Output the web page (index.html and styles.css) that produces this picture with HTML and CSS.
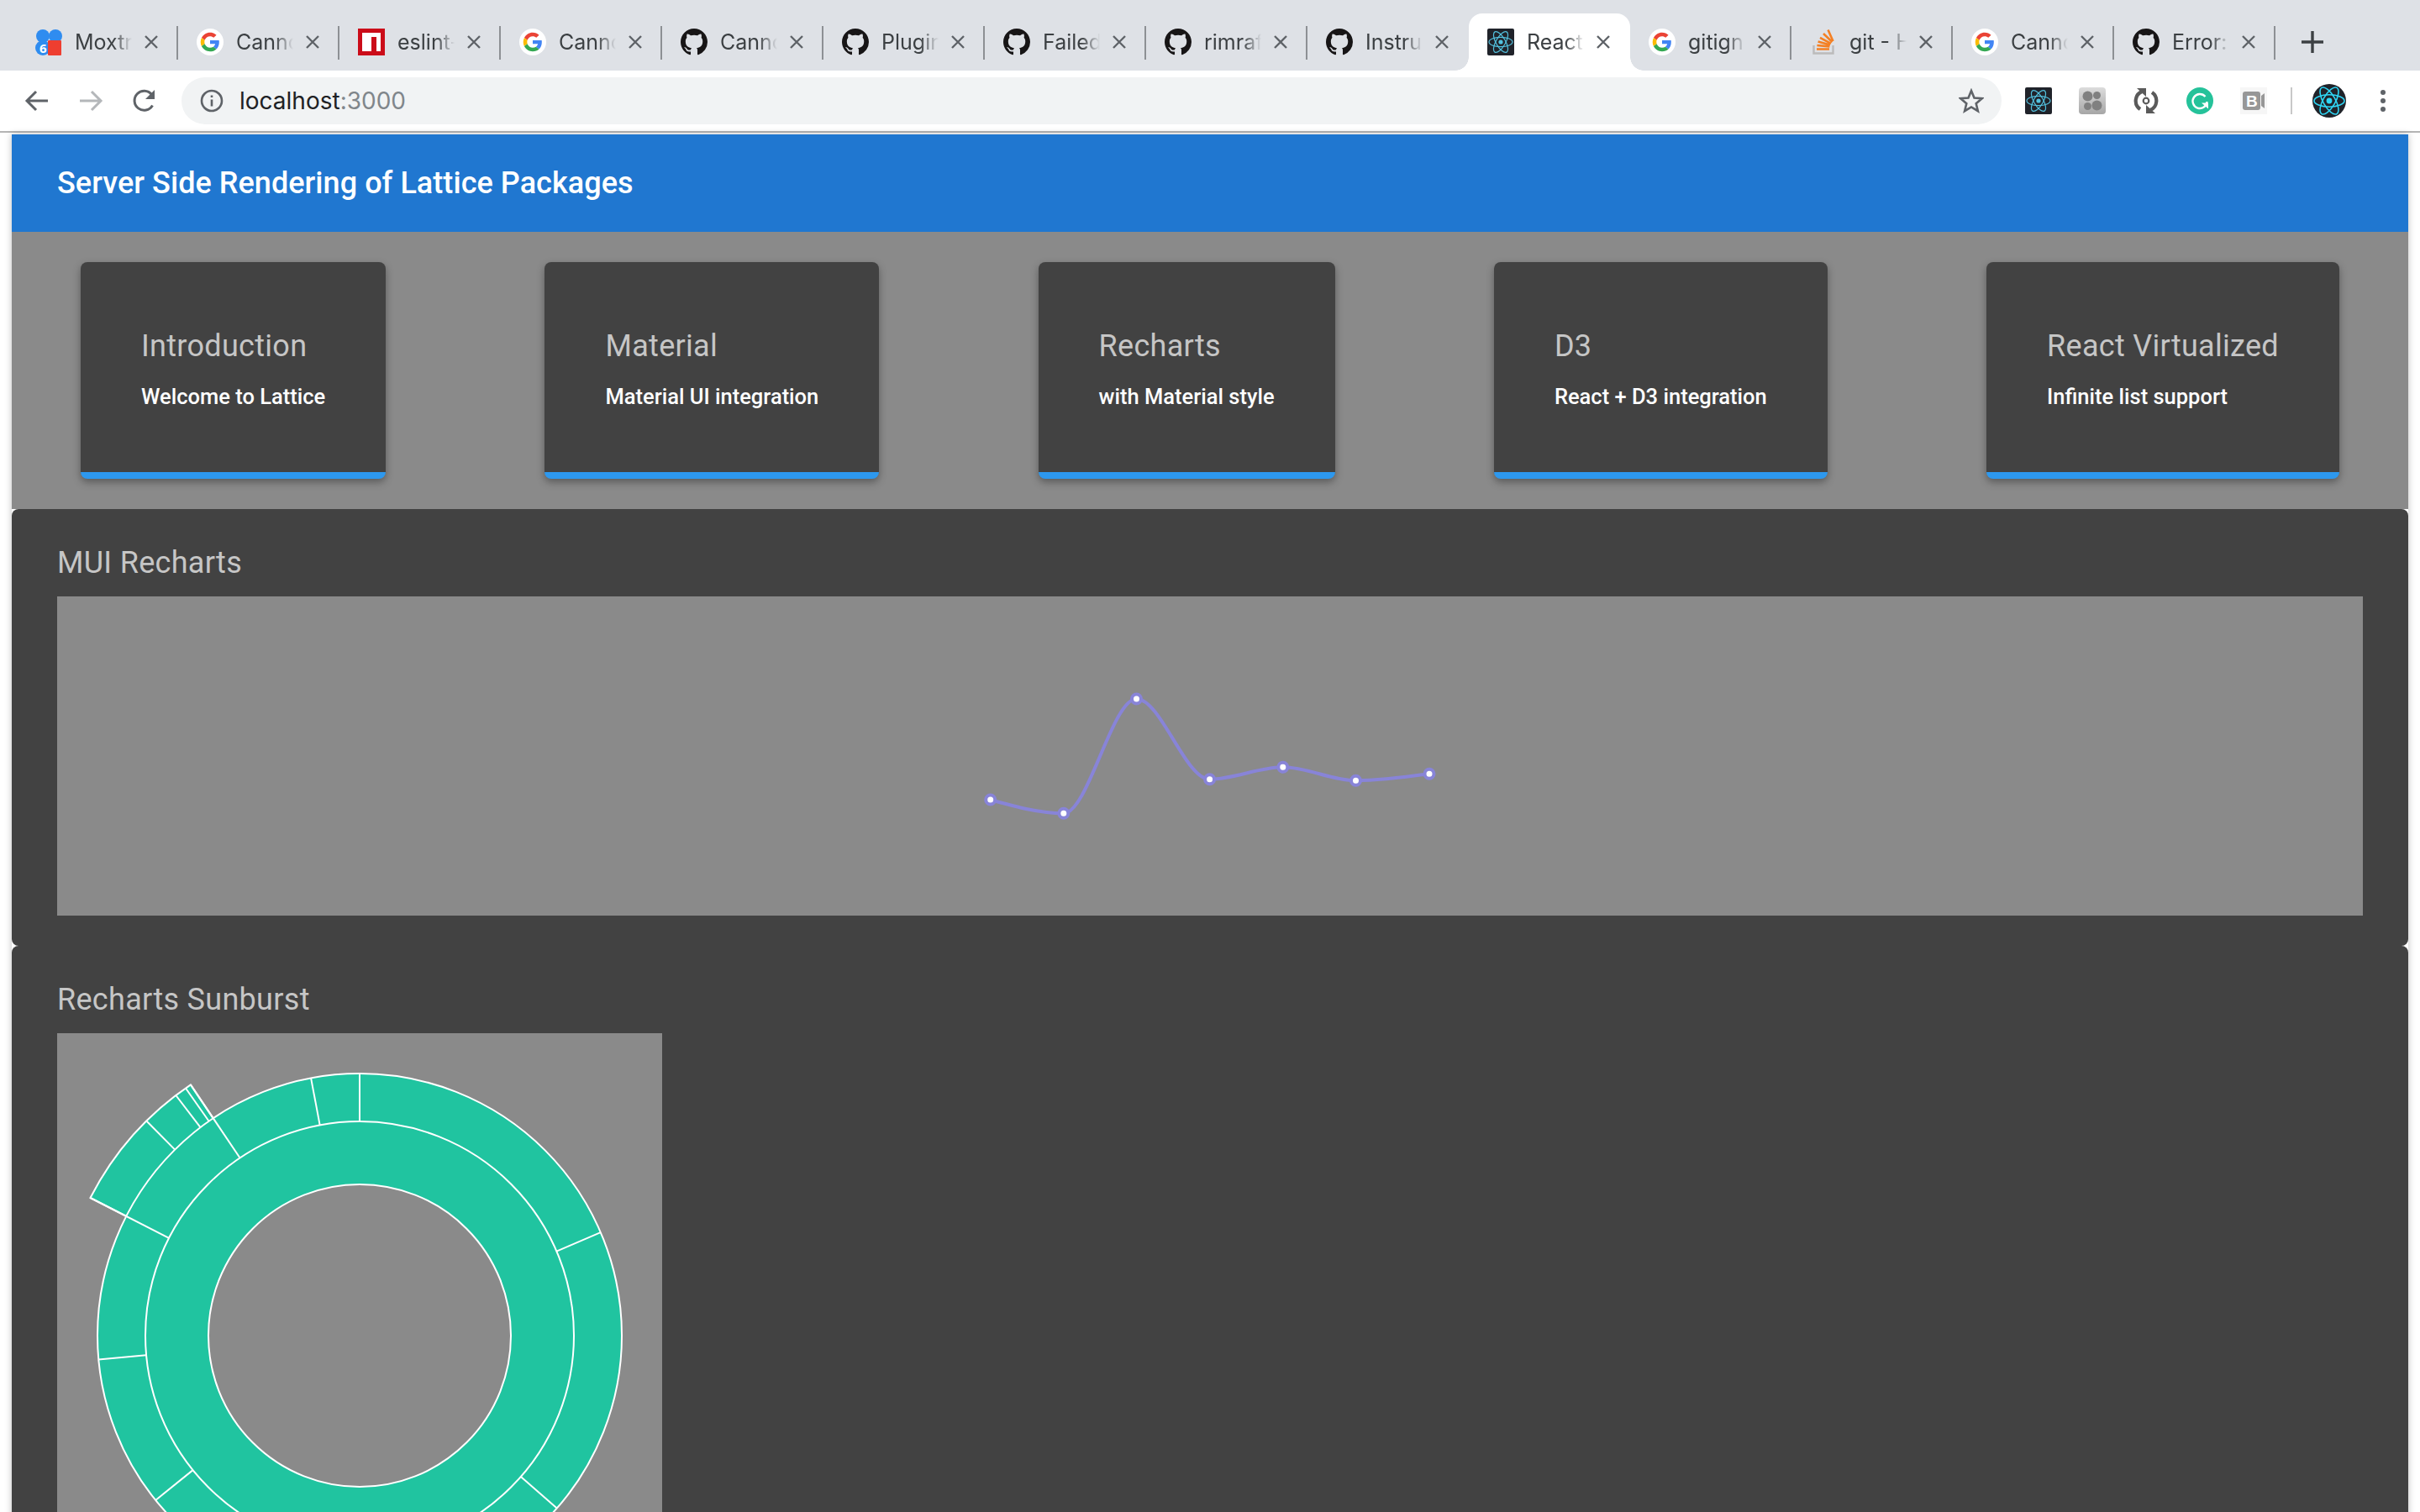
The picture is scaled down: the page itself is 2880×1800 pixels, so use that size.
FILE: index.html
```html
<!DOCTYPE html>
<html lang="en">
<head>
    <meta charset="UTF-8">
    <title>React App</title>
    <link rel="stylesheet" href="styles.css">
</head>
<body>

    <svg class="icon-defs" width="0" height="0">
        <symbol id="i-google" viewBox="-10 -10 68 68">
            <circle cx="24" cy="24" r="34" fill="#fff"/>
            <path fill="#ea4335" d="M24 9.5c3.54 0 6.71 1.22 9.21 3.6l6.85-6.85C35.9 2.38 30.47 0 24 0 14.62 0 6.51 5.38 2.56 13.22l7.98 6.19C12.43 13.72 17.74 9.5 24 9.5z"/>
            <path fill="#4285f4" d="M46.98 24.55c0-1.57-.15-3.09-.38-4.55H24v9.02h12.94c-.58 2.96-2.26 5.48-4.78 7.18l7.73 6c4.51-4.18 7.09-10.36 7.09-17.65z"/>
            <path fill="#fbbc05" d="M10.53 28.59c-.48-1.45-.76-2.99-.76-4.59s.27-3.14.76-4.59l-7.98-6.19C.92 16.46 0 20.12 0 24c0 3.88.92 7.54 2.56 10.78l7.97-6.19z"/>
            <path fill="#34a853" d="M24 48c6.48 0 11.93-2.13 15.89-5.81l-7.73-6c-2.15 1.45-4.92 2.3-8.16 2.3-6.26 0-11.57-4.22-13.47-9.91l-7.98 6.19C6.51 42.62 14.62 48 24 48z"/>
        </symbol>
        <symbol id="i-github" viewBox="0 0 16 16">
            <path fill="#171516" d="M8 0C3.58 0 0 3.58 0 8c0 3.54 2.29 6.53 5.47 7.59.4.07.55-.17.55-.38 0-.19-.01-.82-.01-1.49-2.01.37-2.53-.49-2.69-.94-.09-.23-.48-.94-.82-1.13-.28-.15-.68-.52-.01-.53.63-.01 1.08.58 1.23.82.72 1.21 1.87.87 2.33.66.07-.52.28-.87.51-1.07-1.78-.2-3.64-.89-3.64-3.95 0-.87.31-1.59.82-2.15-.08-.2-.36-1.02.08-2.12 0 0 .67-.21 2.2.82.64-.18 1.32-.27 2-.27.68 0 1.36.09 2 .27 1.53-1.04 2.2-.82 2.2-.82.44 1.1.16 1.92.08 2.12.51.56.82 1.27.82 2.15 0 3.07-1.87 3.75-3.65 3.95.29.25.54.73.54 1.48 0 1.07-.01 1.93-.01 2.2 0 .21.15.46.55.38A8.013 8.013 0 0 0 16 8c0-4.42-3.58-8-8-8z"/>
        </symbol>
        <symbol id="i-react" viewBox="0 0 32 32">
            <rect width="32" height="32" rx="2" fill="#20232a"/>
            <g fill="none" stroke="#53c1de" stroke-width="1.2">
                <ellipse cx="16" cy="16" rx="14" ry="5.6"/>
                <ellipse cx="16" cy="16" rx="14" ry="5.6" transform="rotate(60 16 16)"/>
                <ellipse cx="16" cy="16" rx="14" ry="5.6" transform="rotate(120 16 16)"/>
            </g>
            <circle cx="16" cy="16" r="2.6" fill="#53c1de"/>
        </symbol>
        <symbol id="i-close" viewBox="0 0 16 16">
            <path d="M1 1l14 14M15 1L1 15" stroke="#5f6368" stroke-width="2.4" fill="none"/>
        </symbol>
    </svg>

    <div class="tabstrip">
        <div class="tab">
            <svg class="favicon" viewBox="0 0 32 32">
                <circle cx="9" cy="9" r="8" fill="#2f8cf0"/>
                <circle cx="24" cy="9" r="8" fill="#2f8cf0"/>
                <circle cx="9" cy="23" r="9" fill="#2f8cf0"/>
                <rect x="15" y="14" width="16" height="18" rx="1" fill="#ee3e30"/>
                <text x="5" y="29" class="moxtra-count">6</text>
            </svg>
            <span class="tab-title">Moxtra</span>
            <svg class="tab-close"><use href="#i-close"/></svg>
        </div>
        <div class="tab">
            <svg class="favicon"><use href="#i-google"/></svg>
            <span class="tab-title">Canno</span>
            <svg class="tab-close"><use href="#i-close"/></svg>
        </div>
        <div class="tab">
            <svg class="favicon" viewBox="0 0 32 32">
                <rect width="32" height="32" fill="#cb0c19"/>
                <path fill="#fff" d="M5 5h22v22h-5V10h-6v17H5z"/>
            </svg>
            <span class="tab-title">eslint-</span>
            <svg class="tab-close"><use href="#i-close"/></svg>
        </div>
        <div class="tab">
            <svg class="favicon"><use href="#i-google"/></svg>
            <span class="tab-title">Canno</span>
            <svg class="tab-close"><use href="#i-close"/></svg>
        </div>
        <div class="tab">
            <svg class="favicon"><use href="#i-github"/></svg>
            <span class="tab-title">Canno</span>
            <svg class="tab-close"><use href="#i-close"/></svg>
        </div>
        <div class="tab">
            <svg class="favicon"><use href="#i-github"/></svg>
            <span class="tab-title">Plugin</span>
            <svg class="tab-close"><use href="#i-close"/></svg>
        </div>
        <div class="tab">
            <svg class="favicon"><use href="#i-github"/></svg>
            <span class="tab-title">Failed</span>
            <svg class="tab-close"><use href="#i-close"/></svg>
        </div>
        <div class="tab">
            <svg class="favicon"><use href="#i-github"/></svg>
            <span class="tab-title">rimraf</span>
            <svg class="tab-close"><use href="#i-close"/></svg>
        </div>
        <div class="tab before-active">
            <svg class="favicon"><use href="#i-github"/></svg>
            <span class="tab-title">Instru</span>
            <svg class="tab-close"><use href="#i-close"/></svg>
        </div>
        <div class="tab active">
            <svg class="favicon"><use href="#i-react"/></svg>
            <span class="tab-title">React</span>
            <svg class="tab-close"><use href="#i-close"/></svg>
        </div>
        <div class="tab">
            <svg class="favicon"><use href="#i-google"/></svg>
            <span class="tab-title">gitign</span>
            <svg class="tab-close"><use href="#i-close"/></svg>
        </div>
        <div class="tab">
            <svg class="favicon" viewBox="0 0 32 32">
                <path d="M4.5 20v9.5h23V20" fill="none" stroke="#bcbbbb" stroke-width="2.4"/>
                <path d="M8 24.5h15M8.4 20l15 1.4M9.6 15.4l14.4 4M12 10.8l13 7M16 6l10.500 10M21.500 1.500l6 13.500" fill="none" stroke="#f48024" stroke-width="2.6"/>
            </svg>
            <span class="tab-title">git - H</span>
            <svg class="tab-close"><use href="#i-close"/></svg>
        </div>
        <div class="tab">
            <svg class="favicon"><use href="#i-google"/></svg>
            <span class="tab-title">Canno</span>
            <svg class="tab-close"><use href="#i-close"/></svg>
        </div>
        <div class="tab">
            <svg class="favicon"><use href="#i-github"/></svg>
            <span class="tab-title">Error:</span>
            <svg class="tab-close"><use href="#i-close"/></svg>
        </div>
        <svg class="new-tab" viewBox="0 0 26 26"><path d="M13 0v26M0 13h26" stroke="#3c4043" stroke-width="3.400"/></svg>
    </div>

    <div class="toolbar">
        <svg class="nav-icon" viewBox="0 0 32 32"><path d="M29 16H5M15 5L4 16l11 11" fill="none" stroke="#5f6368" stroke-width="3"/></svg>
        <svg class="nav-icon" viewBox="0 0 32 32"><path d="M3 16h24M17 5l11 11-11 11" fill="none" stroke="#b4b7ba" stroke-width="3"/></svg>
        <svg class="nav-icon" viewBox="0 0 32 32">
            <path d="M25.500 21.500A11.500 11.500 0 1 1 24.500 8.500" fill="none" stroke="#5f6368" stroke-width="3"/>
            <path d="M28 3v11H17z" fill="#5f6368"/>
        </svg>
        <div class="url-bar">
            <svg class="url-info" viewBox="0 0 28 28">
                <circle cx="14" cy="14" r="12" fill="none" stroke="#5f6368" stroke-width="2.600"/>
                <path d="M14 12.500v8M14 7.500v2.500" stroke="#5f6368" stroke-width="2.600"/>
            </svg>
            <span class="url-text">localhost<span class="url-port">:3000</span></span>
            <svg class="url-star" viewBox="0 0 30 30">
                <path d="M15 3l3.500 8.500 9.200.7-7 6 2.200 9L15 22.400 7.100 27.200l2.200-9-7-6 9.200-.7z" fill="none" stroke="#5f6368" stroke-width="2.600"/>
            </svg>
        </div>
        <div class="extensions">
            <svg class="ext-icon"><use href="#i-react"/></svg>
            <svg class="ext-icon" viewBox="0 0 32 32">
                <defs>
                    <linearGradient id="ext-grey" x1="0" y1="0" x2="0" y2="1">
                        <stop offset="0" stop-color="#dcdcdc"/>
                        <stop offset="1" stop-color="#a6a6a6"/>
                    </linearGradient>
                </defs>
                <rect width="32" height="32" rx="4" fill="url(#ext-grey)"/>
                <g fill="#808080">
                    <circle cx="10.500" cy="10.500" r="6"/>
                    <circle cx="21.500" cy="9.500" r="4.500"/>
                    <circle cx="10.500" cy="22.500" r="4.500"/>
                    <circle cx="21.500" cy="21.500" r="6"/>
                </g>
            </svg>
            <svg class="ext-icon" viewBox="0 0 32 32">
                <path d="M9 26A12 12 0 0 1 11 5M23 6A12 12 0 0 1 21 27" fill="none" stroke="#5a5a5a" stroke-width="4.200"/>
                <path d="M5 1h11v10zM27 31H16V21z" fill="#5a5a5a"/>
                <circle cx="16" cy="16" r="3.300" fill="none" stroke="#5a5a5a" stroke-width="2.200"/>
            </svg>
            <svg class="ext-icon" viewBox="0 0 32 32">
                <circle cx="16" cy="16" r="16" fill="#25c29a"/>
                <path d="M22.500 11A8.500 8.500 0 1 0 24.500 17" fill="none" stroke="#fff" stroke-width="2.400"/>
                <path d="M18 18.500h8v7z" fill="#fff"/>
            </svg>
            <svg class="ext-icon" viewBox="0 0 32 32">
                <rect width="32" height="32" fill="#f6f6f6"/>
                <rect x="3" y="5" width="21" height="22" rx="3" fill="#979797"/>
                <path d="M25 10l4-3v18l-4-3z" fill="#979797"/>
                <text x="7" y="22.500" class="bi-letter">B</text>
            </svg>
            <div class="toolbar-divider"></div>
            <svg class="avatar" viewBox="0 0 40 40">
                <circle cx="20" cy="20" r="20" fill="#20232a"/>
                <g fill="none" stroke="#2fd6f5" stroke-width="1.600">
                    <ellipse cx="20" cy="20" rx="18" ry="7.200"/>
                    <ellipse cx="20" cy="20" rx="18" ry="7.200" transform="rotate(60 20 20)"/>
                    <ellipse cx="20" cy="20" rx="18" ry="7.200" transform="rotate(120 20 20)"/>
                </g>
                <circle cx="20" cy="20" r="3.400" fill="#2fd6f5"/>
            </svg>
            <svg class="menu-dots" viewBox="0 0 32 32">
                <circle cx="16" cy="6" r="3" fill="#5f6368"/>
                <circle cx="16" cy="16" r="3" fill="#5f6368"/>
                <circle cx="16" cy="26" r="3" fill="#5f6368"/>
            </svg>
        </div>
    </div>

    <div class="page">

        <header class="app-bar">Server Side Rendering of Lattice Packages</header>

        <div class="card-row">
            <div class="card">
                <h2 class="card-title">Introduction</h2>
                <p class="card-text">Welcome to Lattice</p>
            </div>
            <div class="card">
                <h2 class="card-title">Material</h2>
                <p class="card-text">Material UI integration</p>
            </div>
            <div class="card">
                <h2 class="card-title">Recharts</h2>
                <p class="card-text">with Material style</p>
            </div>
            <div class="card">
                <h2 class="card-title">D3</h2>
                <p class="card-text">React + D3 integration</p>
            </div>
            <div class="card">
                <h2 class="card-title">React Virtualized</h2>
                <p class="card-text">Infinite list support</p>
            </div>
        </div>

        <section class="panel">
            <h2 class="panel-title">MUI Recharts</h2>
            <div class="line-chart">
                <svg width="600" height="200" viewBox="0 0 600 200">
                    <path class="line" d="M38.700 152C67.700 160.100 96.800 168.300 125.800 168.300C154.700 168.300 183.600 32 212.500 32C241.500 32 270.600 127.700 299.600 127.700C328.700 127.700 357.700 113.300 386.800 113.300C415.700 113.300 444.600 129.300 473.500 129.300C502.700 129.300 531.800 125.300 561 121.300"/>
                    <circle class="dot" cx="38.700" cy="152" r="5.500"/>
                    <circle class="dot" cx="125.800" cy="168.300" r="5.500"/>
                    <circle class="dot" cx="212.500" cy="32" r="5.500"/>
                    <circle class="dot" cx="299.600" cy="127.700" r="5.500"/>
                    <circle class="dot" cx="386.800" cy="113.300" r="5.500"/>
                    <circle class="dot" cx="473.500" cy="129.300" r="5.500"/>
                    <circle class="dot" cx="561" cy="121.300" r="5.500"/>
                </svg>
            </div>
        </section>

        <section class="panel">
            <h2 class="panel-title">Recharts Sunburst</h2>
            <svg class="sunburst" width="720" height="720" viewBox="-360 -360 720 720">
                <path class="arc" d="M0 0L-320.500 -164A360 360 0 0 1 -201.100 -298.600Z"/>
                <circle class="arc" r="312"/>
                <circle class="arc" r="255"/>
                <circle class="hole" r="180"/>
                <g class="spokes">
                    <line y1="-255" y2="-312"/>
                    <line y1="-255" y2="-312" transform="rotate(-10.700)"/>
                    <line y1="-255" y2="-360" transform="rotate(-33.960)"/>
                    <line y1="-255" y2="-360" transform="rotate(-62.900)"/>
                    <line y1="-255" y2="-312" transform="rotate(-95.250)"/>
                    <line y1="-255" y2="-312" transform="rotate(-128.900)"/>
                    <line y1="-255" y2="-312" transform="rotate(66.800)"/>
                    <line y1="-255" y2="-312" transform="rotate(131.200)"/>
                    <line y1="-312" y2="-360" transform="rotate(-44.800)"/>
                    <line y1="-312" y2="-360" transform="rotate(-37.400)"/>
                    <line y1="-312" y2="-360" transform="rotate(-35.100)"/>
                </g>
            </svg>
        </section>

    </div>

</body>
</html>
```

FILE: styles.css
```css
html, body {
    margin: 0;
    padding: 0;
    height: 1800px;
    overflow: hidden;
    background-color: #fff;
    font-family: Roboto, "Liberation Sans", sans-serif;
}

.icon-defs {
    display: block;
    height: 0;
}

/* browser chrome */

.tabstrip {
    display: flex;
    align-items: flex-end;
    height: 84px;
    padding-left: 20px;
    background-color: #dee1e6;
}

.tab {
    position: relative;
    display: flex;
    align-items: center;
    box-sizing: border-box;
    width: 192px;
    height: 68px;
    padding-left: 22px;
    flex: none;
}

.tab::after {
    content: "";
    position: absolute;
    right: 0;
    top: 15px;
    width: 2px;
    height: 40px;
    background-color: #8d9094;
}

.tab.before-active::after,
.tab.active::after {
    display: none;
}

.tab.active {
    background-color: #fff;
    border-radius: 16px 16px 0 0;
}

.tab.active::before {
    content: "";
    position: absolute;
    left: -16px;
    right: -16px;
    bottom: 0;
    height: 16px;
    z-index: 0;
    background:
        radial-gradient(circle at 0 0, #dee1e6 15.500px, #fff 16px) left bottom / 16px 16px no-repeat,
        radial-gradient(circle at 100% 0, #dee1e6 15.500px, #fff 16px) right bottom / 16px 16px no-repeat;
}

.favicon {
    width: 32px;
    height: 32px;
    flex: none;
    position: relative;
}

.tab-title {
    width: 90px;
    margin-left: 15px;
    flex: none;
    white-space: nowrap;
    font-family: Inter, Roboto, sans-serif;
    font-size: 25px;
    color: #3c4043;
    -webkit-mask-image: linear-gradient(to right, #000 46px, transparent 68px);
    mask-image: linear-gradient(to right, #000 46px, transparent 68px);
}

.tab-close {
    width: 16px;
    height: 16px;
    margin-left: -7px;
    flex: none;
    position: relative;
}

.new-tab {
    width: 26px;
    height: 26px;
    margin-left: 31px;
    align-self: center;
    margin-top: 16px;
    flex: none;
}

.moxtra-count {
    font-family: "Open Sans", sans-serif;
    font-size: 15px;
    font-weight: 700;
    fill: #fff;
}

.bi-letter {
    font-family: "Liberation Sans", sans-serif;
    font-size: 19px;
    font-weight: 700;
    fill: #fff;
}

.toolbar {
    display: flex;
    align-items: center;
    gap: 32px;
    box-sizing: border-box;
    height: 74px;
    padding-left: 28px;
    background-color: #fff;
    border-bottom: 2px solid #b5b5b5;
}

.nav-icon {
    width: 32px;
    height: 32px;
    flex: none;
}

.url-bar {
    display: flex;
    align-items: center;
    box-sizing: border-box;
    width: 2166px;
    height: 56px;
    margin-left: -4px;
    padding: 0 21px 0 22px;
    border-radius: 28px;
    background-color: #f1f3f4;
    flex: none;
}

.url-info {
    width: 28px;
    height: 28px;
    flex: none;
}

.url-text {
    margin-left: 19px;
    font-family: Inter, Roboto, sans-serif;
    font-size: 28px;
    color: #202124;
}

.url-port {
    color: #80868b;
}

.url-star {
    width: 30px;
    height: 30px;
    margin-left: auto;
    flex: none;
}

.extensions {
    display: flex;
    align-items: center;
    gap: 32px;
    margin-left: -4px;
}

.ext-icon {
    width: 32px;
    height: 32px;
    flex: none;
}

.toolbar-divider {
    width: 2px;
    height: 32px;
    margin: 0 -4px;
    background-color: #c8c8c8;
}

.avatar {
    width: 40px;
    height: 40px;
    margin-left: -4px;
    flex: none;
}

.menu-dots {
    width: 32px;
    height: 32px;
    margin-left: -4px;
    flex: none;
}

/* the page itself */

.page {
    margin: 2px 14px 0;
    box-shadow: 0 0 8px rgba(0, 0, 0, 0.25);
}

.app-bar {
    box-sizing: border-box;
    height: 116px;
    padding-left: 54px;
    line-height: 116px;
    font-size: 36px;
    font-weight: 500;
    letter-spacing: 0.05px;
    color: #fff;
    background-color: #2077d0;
}

.card-row {
    display: flex;
    justify-content: space-between;
    padding: 36px 82px;
    background-color: #8a8a8a;
}

.card {
    box-sizing: border-box;
    height: 258px;
    padding: 76px 72px 0;
    border-radius: 8px;
    border-bottom: 8px solid #2d98ee;
    background-color: #424242;
    box-shadow: 0 4px 10px rgba(0, 0, 0, 0.35);
}

.card-title {
    margin: 0;
    font-size: 36px;
    line-height: 48px;
    font-weight: 400;
    letter-spacing: 0.3px;
    color: #c6c6c6;
    white-space: nowrap;
}

.card-text {
    margin: 16px 0 0;
    font-size: 25.500px;
    line-height: 40px;
    font-weight: 500;
    color: #fff;
    white-space: nowrap;
}

.panel {
    box-sizing: border-box;
    padding: 36px 54px;
    border-radius: 8px;
    background-color: #424242;
}

.panel-title {
    height: 68px;
    margin: 0;
    font-size: 36px;
    line-height: 56px;
    font-weight: 400;
    letter-spacing: 0.3px;
    color: #c6c6c6;
}

.line-chart {
    display: flex;
    align-items: center;
    justify-content: center;
    height: 380px;
    background-color: #8a8a8a;
}

.line {
    fill: none;
    stroke: #8884d8;
    stroke-width: 4;
}

.dot {
    fill: #fff;
    stroke: #8884d8;
    stroke-width: 4;
}

.sunburst {
    display: block;
    background-color: #8a8a8a;
}

.arc {
    fill: #20c4a0;
    stroke: #fff;
    stroke-width: 2;
}

.hole {
    fill: #8a8a8a;
    stroke: #fff;
    stroke-width: 2;
}

.spokes line {
    stroke: #fff;
    stroke-width: 2;
}
```
